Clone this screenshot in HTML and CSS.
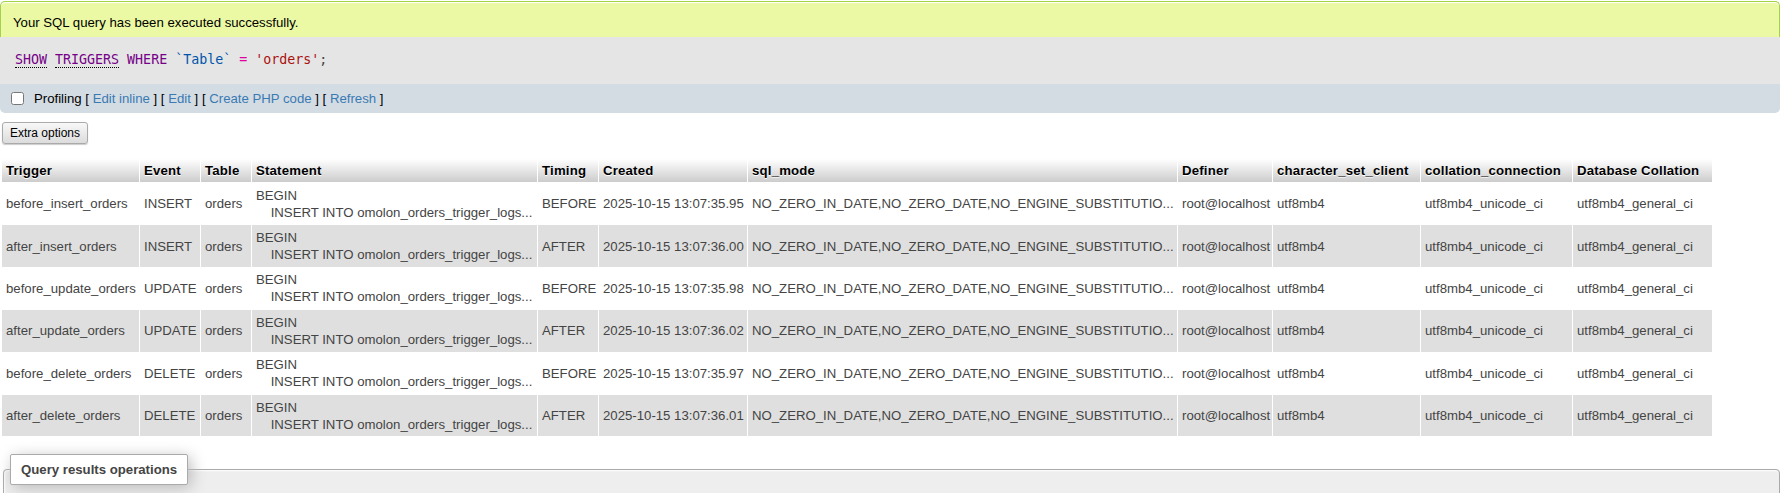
FILE: index.html
```html
<!DOCTYPE html>
<html>
<head>
<meta charset="utf-8">
<link rel="stylesheet" href="styles.css">
</head>
<body>
<div class="result-query">
  <div class="success">Your SQL query has been executed successfully.</div>
  <div class="sql-outer"><code class="sql"><abbr class="kw u">SHOW</abbr> <abbr class="kw u">TRIGGERS</abbr> <span class="kw">WHERE</span> <span class="var">`Table`</span> <span class="op">=</span> <span class="str">'orders'</span>;</code></div>
  <div class="tools"><input type="checkbox" class="chk" id="prof"><span class="tool-text"><label for="prof">Profiling</label> [ <a href="#">Edit inline</a> ] [ <a href="#">Edit</a> ] [ <a href="#">Create PHP code</a> ] [ <a href="#">Refresh</a> ]</span></div>
</div>
<div class="extra"><button class="btn">Extra options</button></div>
<table class="data">
  <thead>
    <tr>
      <th class="c-trig">Trigger</th><th class="c-ev">Event</th><th class="c-tab">Table</th><th class="c-stmt">Statement</th><th class="c-tim">Timing</th><th class="c-cr">Created</th><th class="c-mode">sql_mode</th><th class="c-def">Definer</th><th class="c-csc">character_set_client</th><th class="c-cc">collation_connection</th><th class="c-dc">Database Collation</th>
    </tr>
  </thead>
  <tbody>
    <tr class="odd"><td>before_insert_orders</td><td>INSERT</td><td>orders</td><td class="stmt">BEGIN
    INSERT INTO omolon_orders_trigger_logs...</td><td>BEFORE</td><td>2025-10-15 13:07:35.95</td><td>NO_ZERO_IN_DATE,NO_ZERO_DATE,NO_ENGINE_SUBSTITUTIO...</td><td>root@localhost</td><td>utf8mb4</td><td>utf8mb4_unicode_ci</td><td>utf8mb4_general_ci</td></tr>
    <tr class="even"><td>after_insert_orders</td><td>INSERT</td><td>orders</td><td class="stmt">BEGIN
    INSERT INTO omolon_orders_trigger_logs...</td><td>AFTER</td><td>2025-10-15 13:07:36.00</td><td>NO_ZERO_IN_DATE,NO_ZERO_DATE,NO_ENGINE_SUBSTITUTIO...</td><td>root@localhost</td><td>utf8mb4</td><td>utf8mb4_unicode_ci</td><td>utf8mb4_general_ci</td></tr>
    <tr class="odd"><td>before_update_orders</td><td>UPDATE</td><td>orders</td><td class="stmt">BEGIN
    INSERT INTO omolon_orders_trigger_logs...</td><td>BEFORE</td><td>2025-10-15 13:07:35.98</td><td>NO_ZERO_IN_DATE,NO_ZERO_DATE,NO_ENGINE_SUBSTITUTIO...</td><td>root@localhost</td><td>utf8mb4</td><td>utf8mb4_unicode_ci</td><td>utf8mb4_general_ci</td></tr>
    <tr class="even"><td>after_update_orders</td><td>UPDATE</td><td>orders</td><td class="stmt">BEGIN
    INSERT INTO omolon_orders_trigger_logs...</td><td>AFTER</td><td>2025-10-15 13:07:36.02</td><td>NO_ZERO_IN_DATE,NO_ZERO_DATE,NO_ENGINE_SUBSTITUTIO...</td><td>root@localhost</td><td>utf8mb4</td><td>utf8mb4_unicode_ci</td><td>utf8mb4_general_ci</td></tr>
    <tr class="odd"><td>before_delete_orders</td><td>DELETE</td><td>orders</td><td class="stmt">BEGIN
    INSERT INTO omolon_orders_trigger_logs...</td><td>BEFORE</td><td>2025-10-15 13:07:35.97</td><td>NO_ZERO_IN_DATE,NO_ZERO_DATE,NO_ENGINE_SUBSTITUTIO...</td><td>root@localhost</td><td>utf8mb4</td><td>utf8mb4_unicode_ci</td><td>utf8mb4_general_ci</td></tr>
    <tr class="even"><td>after_delete_orders</td><td>DELETE</td><td>orders</td><td class="stmt">BEGIN
    INSERT INTO omolon_orders_trigger_logs...</td><td>AFTER</td><td>2025-10-15 13:07:36.01</td><td>NO_ZERO_IN_DATE,NO_ZERO_DATE,NO_ENGINE_SUBSTITUTIO...</td><td>root@localhost</td><td>utf8mb4</td><td>utf8mb4_unicode_ci</td><td>utf8mb4_general_ci</td></tr>
  </tbody>
</table>
<fieldset class="ops"><legend>Query results operations</legend></fieldset>
</body>
</html>
```

FILE: styles.css
```css
html, body {
  margin: 0;
  padding: 0;
  background: #fff;
  overflow: hidden;
}
body {
  font-family: "Liberation Sans", Arial, sans-serif;
  font-size: 13.2px;
  color: #444;
}
.result-query {
  margin: 1px 0 0 0;
}
.success {
  background: #ebf8a4;
  border: 1px solid #a2d246;
  border-bottom: none;
  border-radius: 5px 5px 0 0;
  box-shadow: 0 1px 1px #fff inset;
  color: #000;
  padding: 13px 12px 7px;
  line-height: 15px;
}
.sql-outer {
  background: #e5e5e5;
  padding: 14px 15px 16px;
  line-height: 17px;
}
.sql {
  font-family: "DejaVu Sans Mono", "Liberation Mono", monospace;
  font-size: 13.3px;
  color: #444;
}
.kw { color: #770088; }
abbr.u {
  text-decoration: none;
  border-bottom: 1px dotted #000;
}
.var { color: #0055aa; }
.op { color: #e000a0; }
.str { color: #aa1111; }
.tools {
  background: #d3dce3;
  border-radius: 0 0 5px 5px;
  padding: 6px 12px 6px 11px;
  line-height: 17px;
  color: #000;
  display: flex;
  align-items: center;
}
.chk {
  margin: 0 10px 0 0;
  width: 13px;
  height: 13px;
}
.tools a {
  color: #3a7ab3;
  text-decoration: none;
}
.extra {
  padding: 9px 0 0 2px;
}
.btn {
  font-family: "Liberation Sans", Arial, sans-serif;
  font-size: 12px;
  color: #000;
  background: linear-gradient(#f8f8f8, #dcdcdc);
  border: 1px solid #aaa;
  border-radius: 3px;
  padding: 0 7px;
  height: 22px;
  line-height: 20px;
  box-shadow: 0 1px 1px #ccc;
}
table.data {
  margin: 14px 0 0 1px;
  border-collapse: separate;
  border-spacing: 1px;
  table-layout: fixed;
  width: 1712px;
}
.data th {
  box-sizing: border-box;
  background: linear-gradient(#ffffff, #cccccc);
  color: #000;
  font-weight: bold;
  text-align: left;
  text-shadow: 0 1px 0 #fff;
  padding: 3px 4px;
  line-height: 17px;
  white-space: nowrap;
  letter-spacing: 0.2px;
}
.c-trig { width: 137px; }
.c-ev { width: 60px; }
.c-tab { width: 50px; }
.c-stmt { width: 285px; }
.c-tim { width: 60px; }
.c-cr { width: 148px; }
.c-mode { width: 429px; }
.c-def { width: 94px; }
.c-csc { width: 147px; }
.c-cc { width: 151px; }
.c-dc { width: 139px; }
.data td {
  padding: 3.7px 4px;
  line-height: 17px;
  white-space: nowrap;
  overflow: hidden;
  vertical-align: middle;
}
.data td.stmt {
  white-space: pre;
}
.data tr.odd td { background: #fff; }
.data tr.even td { background: #dfdfdf; }
.ops {
  margin: 17px 0 0 3px;
  border: 1px solid #aaa;
  border-radius: 4px 4px 0 0;
  background: #eee;
  box-shadow: 1px 1px 2px #fff inset;
  height: 80px;
  padding: 0 20px;
}
.ops legend {
  font-weight: bold;
  font-size: 13.2px;
  color: #444;
  background: #fff;
  border: 1px solid #aaa;
  border-radius: 2px;
  padding: 7px 10px;
  line-height: 15px;
  box-shadow: 3px 3px 15px #bbb;
  margin-left: -14px;
}
```
